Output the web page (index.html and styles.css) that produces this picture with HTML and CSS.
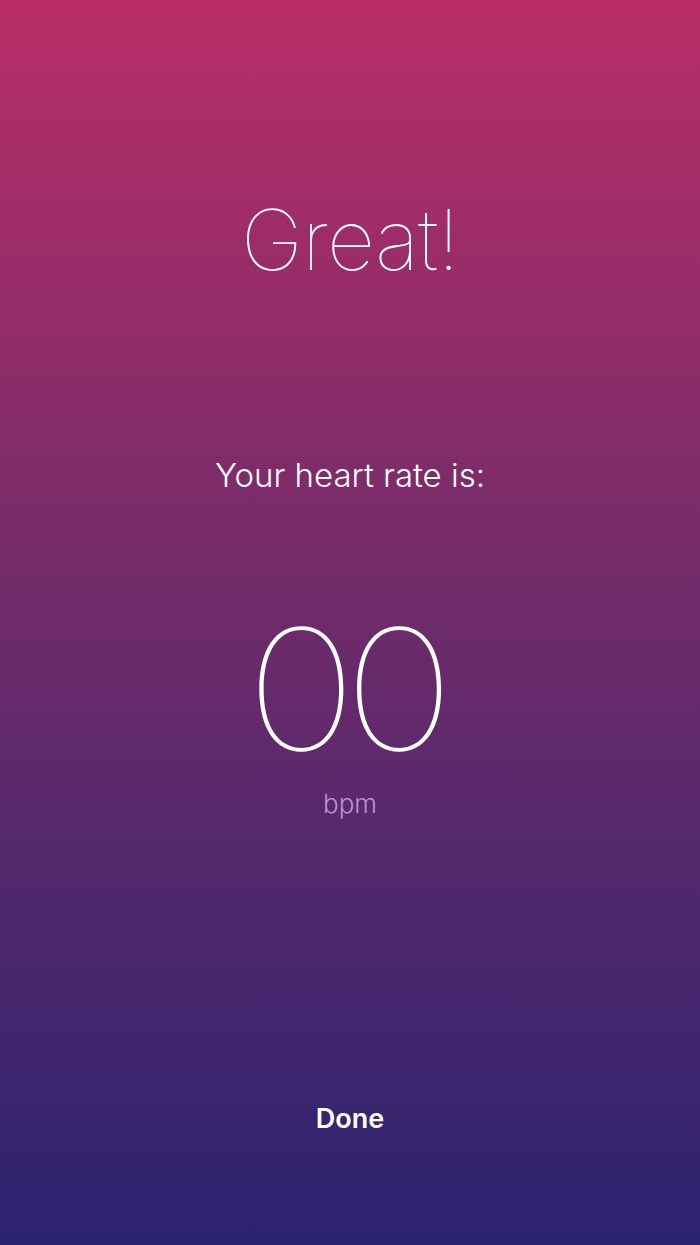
FILE: index.html
```html
<!DOCTYPE html>
<html lang="en">
<head>
    <meta charset="UTF-8">
    <meta name="viewport" content="width=device-width, initial-scale=1.0">
    <title>Heart Rate Result</title>
    <link rel="stylesheet" href="styles.css">
</head>
<body>
    <div class="screen">
        <h1 class="title">Great!</h1>
        <p class="label">Your heart rate is:</p>
        <div class="rate">00</div>
        <div class="unit">bpm</div>
        <button class="done">Done</button>
    </div>
</body>
</html>
```

FILE: styles.css
```css
html, body {
    margin: 0;
    height: 100%;
}
body {
    font-family: Inter, "Noto Sans", sans-serif;
    color: #fff;
    background: linear-gradient(to bottom, #ba2e67 0%, #6d2b6a 50%, #2b2370 100%);
}
.screen {
    height: 100vh;
    display: flex;
    flex-direction: column;
    align-items: center;
    box-sizing: border-box;
    padding-top: 198px;
    padding-bottom: 113px;
}
.title {
    margin: 0;
    font-size: 84px;
    line-height: 1;
    font-weight: 100;
    letter-spacing: -1px;
}
.label {
    margin: 177px 0 0;
    font-size: 33px;
    line-height: 1;
    font-weight: 300;
}
.rate {
    margin-top: 113px;
    font-size: 168px;
    line-height: 1;
    font-weight: 100;
    letter-spacing: -12px;
    padding-right: 12px;
    transform: scaleX(1.12);
}
.unit {
    margin-top: 18px;
    font-size: 26px;
    line-height: 1;
    font-weight: 300;
    color: #bd92d2;
}
.done {
    margin-top: auto;
    background: none;
    border: none;
    padding: 0;
    color: #fff;
    font-family: inherit;
    font-size: 27px;
    line-height: 1;
    font-weight: 600;
    cursor: pointer;
}
```
